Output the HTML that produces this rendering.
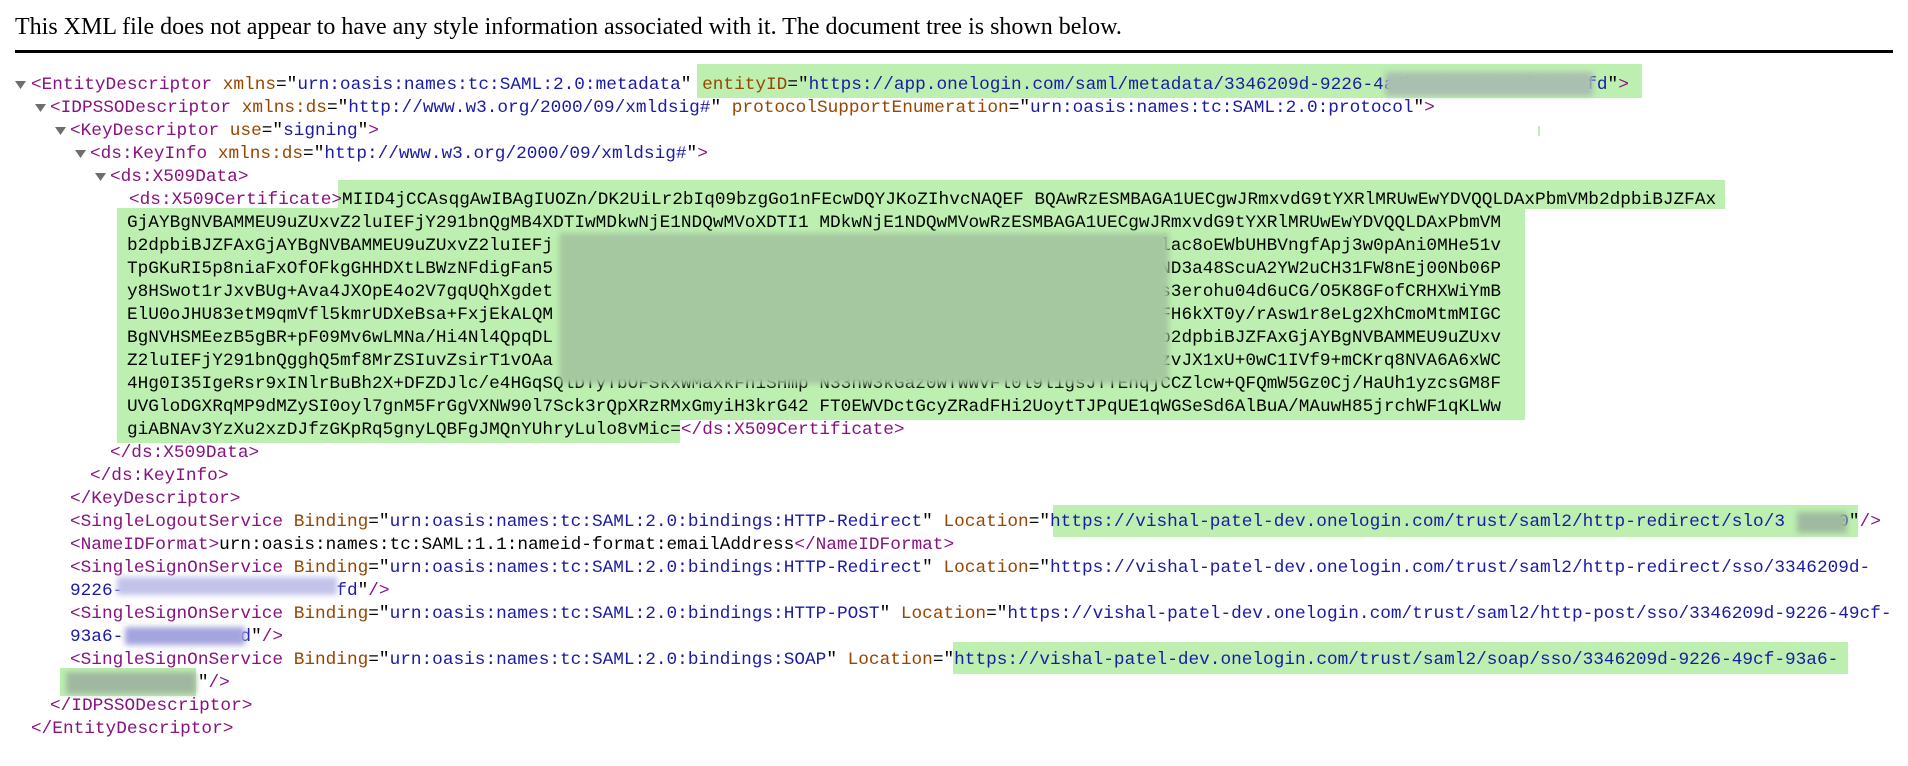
<!DOCTYPE html>
<html><head><meta charset="utf-8"><style>
html,body{margin:0;padding:0;background:#fff;width:1908px;height:766px;overflow:hidden;position:relative}
.hd{position:absolute;left:15px;top:13px;font-family:"Liberation Serif",serif;font-size:24px;line-height:28px;color:#000;white-space:pre}
.rule{position:absolute;left:15px;top:50px;width:1878px;height:3px;background:#000}
.l{position:absolute;height:23px;line-height:23px;font-family:"Liberation Mono",monospace;font-size:17.75px;white-space:pre;color:#000;z-index:2}
.t{color:#881280}.a{color:#994500}.v{color:#1a1aa6}
.hl{position:absolute;background:#bdf0b0;z-index:1}
.bl{position:absolute;z-index:3;filter:blur(3px)}
.tri{position:absolute;z-index:2}
.r{position:absolute;right:0;top:0}
</style></head><body>
<div class="hd">This XML file does not appear to have any style information associated with it. The document tree is shown below.</div>
<div class="rule"></div>

<div class="hl" style="left:697px;top:64px;width:945px;height:34px"></div>
<div class="hl" style="left:1538px;top:126px;width:2px;height:10px"></div>
<div class="hl" style="left:338px;top:180px;width:1387px;height:29px"></div>
<div class="hl" style="left:117px;top:208px;width:1408px;height:212px"></div>
<div class="hl" style="left:117px;top:419px;width:563px;height:24px"></div>
<div class="hl" style="left:1053px;top:505px;width:805px;height:32px"></div>
<div class="hl" style="left:953px;top:642px;width:895px;height:32px"></div>
<div class="hl" style="left:60px;top:668px;width:136px;height:28px"></div>

<svg class="tri" style="left:15px;top:81px" width="11" height="8"><polygon points="0,0 11,0 5.5,8" fill="#6e6e6e"/></svg>
<svg class="tri" style="left:35px;top:104px" width="11" height="8"><polygon points="0,0 11,0 5.5,8" fill="#6e6e6e"/></svg>
<svg class="tri" style="left:55px;top:127px" width="11" height="8"><polygon points="0,0 11,0 5.5,8" fill="#6e6e6e"/></svg>
<svg class="tri" style="left:75px;top:150px" width="11" height="8"><polygon points="0,0 11,0 5.5,8" fill="#6e6e6e"/></svg>
<svg class="tri" style="left:95px;top:173px" width="11" height="8"><polygon points="0,0 11,0 5.5,8" fill="#6e6e6e"/></svg>

<div class="l" style="top:73.5px;left:31px"><span class="t">&lt;EntityDescriptor</span> <span class="a">xmlns</span>="<span class="v">urn:oasis:names:tc:SAML:2.0:metadata</span>" <span class="a">entityID</span>="<span class="v">https://app.onelogin.com/saml/metadata/3346209d-9226-4a7b-93a6-89e0d3a5e0fd</span>"<span class="t">&gt;</span></div>
<div class="l" style="top:96.5px;left:50px"><span class="t">&lt;IDPSSODescriptor</span> <span class="a">xmlns:ds</span>="<span class="v">http://www.w3.org/2000/09/xmldsig#</span>" <span class="a">protocolSupportEnumeration</span>="<span class="v">urn:oasis:names:tc:SAML:2.0:protocol</span>"<span class="t">&gt;</span></div>
<div class="l" style="top:119.5px;left:70px"><span class="t">&lt;KeyDescriptor</span> <span class="a">use</span>="<span class="v">signing</span>"<span class="t">&gt;</span></div>
<div class="l" style="top:142.5px;left:90px"><span class="t">&lt;ds:KeyInfo</span> <span class="a">xmlns:ds</span>="<span class="v">http://www.w3.org/2000/09/xmldsig#</span>"<span class="t">&gt;</span></div>
<div class="l" style="top:165.5px;left:110px"><span class="t">&lt;ds:X509Data&gt;</span></div>
<div class="l" style="top:188.5px;left:129px"><span class="t">&lt;ds:X509Certificate&gt;</span>MIID4jCCAsqgAwIBAgIUOZn/DK2UiLr2bIq09bzgGo1nFEcwDQYJKoZIhvcNAQEF BQAwRzESMBAGA1UECgwJRmxvdG9tYXRlMRUwEwYDVQQLDAxPbmVMb2dpbiBJZFAx</div>
<div class="l" style="top:211.5px;left:127px">GjAYBgNVBAMMEU9uZUxvZ2luIEFjY291bnQgMB4XDTIwMDkwNjE1NDQwMVoXDTI1 MDkwNjE1NDQwMVowRzESMBAGA1UECgwJRmxvdG9tYXRlMRUwEwYDVQQLDAxPbmVM</div>
<div class="l" style="top:234.5px;left:127px;width:1374px">b2dpbiBJZFAxGjAYBgNVBAMMEU9uZUxvZ2luIEFj<span class="r">lac8oEWbUHBVngfApj3w0pAni0MHe51v</span></div>
<div class="l" style="top:257.5px;left:127px;width:1374px">TpGKuRI5p8niaFxOfOFkgGHHDXtLBWzNFdigFan5<span class="r">ND3a48ScuA2YW2uCH31FW8nEj00Nb06P</span></div>
<div class="l" style="top:280.5px;left:127px;width:1374px">y8HSwot1rJxvBUg+Ava4JXOpE4o2V7gqUQhXgdet<span class="r">s3erohu04d6uCG/O5K8GFofCRHXWiYmB</span></div>
<div class="l" style="top:303.5px;left:127px;width:1374px">ElU0oJHU83etM9qmVfl5kmrUDXeBsa+FxjEkALQM<span class="r">FH6kXT0y/rAsw1r8eLg2XhCmoMtmMIGC</span></div>
<div class="l" style="top:326.5px;left:127px;width:1374px">BgNVHSMEezB5gBR+pF09Mv6wLMNa/Hi4Nl4QpqDL<span class="r">b2dpbiBJZFAxGjAYBgNVBAMMEU9uZUxv</span></div>
<div class="l" style="top:349.5px;left:127px;width:1374px">Z2luIEFjY291bnQgghQ5mf8MrZSIuvZsirT1vOAa<span class="r">zvJX1xU+0wC1IVf9+mCKrq8NVA6A6xWC</span></div>
<div class="l" style="top:372.5px;left:127px">4Hg0I35IgeRsr9xINlrBuBh2X+DFZDJlc/e4HGqSQlDTyTbOFSkxWMaxkFhiSHmp N33hW3kGaz0wTWWvFl0l9l1gsJTTEhqjCCZlcw+QFQmW5Gz0Cj/HaUh1yzcsGM8F</div>
<div class="l" style="top:395.5px;left:127px">UVGloDGXRqMP9dMZySI0oyl7gnM5FrGgVXNW90l7Sck3rQpXRzRMxGmyiH3krG42 FT0EWVDctGcyZRadFHi2UoytTJPqUE1qWGSeSd6AlBuA/MAuwH85jrchWF1qKLWw</div>
<div class="l" style="top:418.5px;left:127px">giABNAv3YzXu2xzDJfzGKpRq5gnyLQBFgJMQnYUhryLulo8vMic=<span class="t">&lt;/ds:X509Certificate&gt;</span></div>
<div class="l" style="top:441.5px;left:110px"><span class="t">&lt;/ds:X509Data&gt;</span></div>
<div class="l" style="top:464.5px;left:90px"><span class="t">&lt;/ds:KeyInfo&gt;</span></div>
<div class="l" style="top:487.5px;left:70px"><span class="t">&lt;/KeyDescriptor&gt;</span></div>
<div class="l" style="top:510.5px;left:70px"><span class="t">&lt;SingleLogoutService</span> <span class="a">Binding</span>="<span class="v">urn:oasis:names:tc:SAML:2.0:bindings:HTTP-Redirect</span>" <span class="a">Location</span>="<span class="v">https://vishal-patel-dev.onelogin.com/trust/saml2/http-redirect/slo/3     0</span>"<span class="t">/&gt;</span></div>
<div class="l" style="top:533.5px;left:70px"><span class="t">&lt;NameIDFormat&gt;</span>urn:oasis:names:tc:SAML:1.1:nameid-format:emailAddress<span class="t">&lt;/NameIDFormat&gt;</span></div>
<div class="l" style="top:556.5px;left:70px"><span class="t">&lt;SingleSignOnService</span> <span class="a">Binding</span>="<span class="v">urn:oasis:names:tc:SAML:2.0:bindings:HTTP-Redirect</span>" <span class="a">Location</span>="<span class="v">https://vishal-patel-dev.onelogin.com/trust/saml2/http-redirect/sso/3346209d-</span></div>
<div class="l" style="top:579.5px;left:70px"><span class="v">9226-                    fd</span>"<span class="t">/&gt;</span></div>
<div class="l" style="top:602.5px;left:70px"><span class="t">&lt;SingleSignOnService</span> <span class="a">Binding</span>="<span class="v">urn:oasis:names:tc:SAML:2.0:bindings:HTTP-POST</span>" <span class="a">Location</span>="<span class="v">https://vishal-patel-dev.onelogin.com/trust/saml2/http-post/sso/3346209d-9226-49cf-</span></div>
<div class="l" style="top:625.5px;left:70px"><span class="v">93a6-           d</span>"<span class="t">/&gt;</span></div>
<div class="l" style="top:648.5px;left:70px"><span class="t">&lt;SingleSignOnService</span> <span class="a">Binding</span>="<span class="v">urn:oasis:names:tc:SAML:2.0:bindings:SOAP</span>" <span class="a">Location</span>="<span class="v">https://vishal-patel-dev.onelogin.com/trust/saml2/soap/sso/3346209d-9226-49cf-93a6-</span></div>
<div class="l" style="top:671.5px;left:70px"><span class="v">            </span>"<span class="t">/&gt;</span></div>
<div class="l" style="top:694.5px;left:50px"><span class="t">&lt;/IDPSSODescriptor&gt;</span></div>
<div class="l" style="top:717.5px;left:31px"><span class="t">&lt;/EntityDescriptor&gt;</span></div>

<div class="bl" style="left:1385px;top:72px;width:208px;height:24px;background:#a9bfb0"></div>
<div class="bl" style="left:559px;top:233px;width:610px;height:151px;background:#a6c8a0"></div>
<div class="bl" style="left:1797px;top:512px;width:50px;height:21px;background:#9fbaa0"></div>
<div class="bl" style="left:117px;top:577px;width:220px;height:18px;background:#c2c2ea"></div>
<div class="bl" style="left:125px;top:627px;width:120px;height:18px;background:#a4a4de"></div>
<div class="bl" style="left:66px;top:672px;width:130px;height:22px;background:#9fb89f"></div>
</body></html>
